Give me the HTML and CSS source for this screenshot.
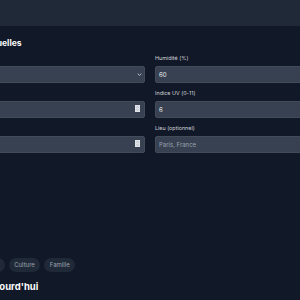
FILE: index.html
```html
<!DOCTYPE html>
<html lang="fr">

<head>
    <meta charset="utf-8">
    <link rel="stylesheet" href="styles.css">
</head>

<body>
    <header class="topbar"></header>

    <main class="wrap">
        <div class="page">
            <h2 class="title">Vos conditions actuelles</h2>

            <div class="form-grid">
                <div class="field">
                    <label for="meteo">Météo</label>
                    <div class="control">
                        <select id="meteo" class="input">
                            <option>Ensoleillé</option>
                        </select>
                        <svg class="chevron" viewBox="0 0 8 5"><path d="M1 1 L4 4 L7 1" fill="none" stroke="#d1d5db" stroke-width="1.4"/></svg>
                    </div>
                </div>
                <div class="field">
                    <label for="humidite">Humidité (%)</label>
                    <input type="text" id="humidite" class="input" value="60">
                </div>

                <div class="field">
                    <label for="temp">Temp. (°C)</label>
                    <div class="control">
                        <input type="text" id="temp" class="input" value="">
                        <svg class="spin" viewBox="0 0 5 7">
                            <rect x="0" y="0" width="5" height="7" fill="#dfe2e7"/>
                            <path d="M1.5 2.6 L2.5 1.6 L3.5 2.6 M1.5 4.4 L2.5 5.4 L3.5 4.4" fill="none" stroke="#8a919c" stroke-width="0.6"/>
                        </svg>
                    </div>
                </div>
                <div class="field">
                    <label for="uv">Indice UV (0-11)</label>
                    <input type="text" id="uv" class="input" value="6">
                </div>

                <div class="field">
                    <label for="vent">Vent (km/h)</label>
                    <div class="control">
                        <input type="text" id="vent" class="input" value="">
                        <svg class="spin" viewBox="0 0 5 7">
                            <rect x="0" y="0" width="5" height="7" fill="#dfe2e7"/>
                            <path d="M1.5 2.6 L2.5 1.6 L3.5 2.6 M1.5 4.4 L2.5 5.4 L3.5 4.4" fill="none" stroke="#8a919c" stroke-width="0.6"/>
                        </svg>
                    </div>
                </div>
                <div class="field">
                    <label for="lieu">Lieu (optionnel)</label>
                    <input type="text" id="lieu" class="input" placeholder="Paris, France">
                </div>
            </div>

            <div class="chips">
                <span class="chip">Plein air</span>
                <span class="chip">Gastronomie</span>
                <span class="chip">Culture</span>
                <span class="chip">Famille</span>
            </div>

            <h2 class="title today">Programme d'aujourd'hui</h2>
        </div>
    </main>
</body>

</html>
```

FILE: styles.css
```css
* {
    box-sizing: border-box;
}

body {
    margin: 0;
    background-color: #111827;
    font-family: "Inter", "Noto Sans", sans-serif;
    color: #f3f4f6;
    overflow: hidden;
    height: 300px;
}

.topbar {
    height: 26px;
    background-color: #1f2937;
}

.wrap {
    display: flex;
    justify-content: center;
}

.page {
    flex-shrink: 0;
    width: 460px;
}

.title {
    margin: 11px 0 0;
    font-size: 8.5px;
    line-height: 12px;
    font-weight: 700;
    color: #f9fafb;
}

.form-grid {
    margin-top: 6px;
    display: grid;
    grid-template-columns: 1fr 1fr;
    column-gap: 10px;
    row-gap: 7px;
}

.field label {
    display: block;
    font-size: 5.4px;
    line-height: 7px;
    color: #d1d5db;
    margin-bottom: 4px;
}

.control {
    position: relative;
}

.input {
    display: block;
    width: 100%;
    height: 17px;
    padding: 0 3px;
    background-color: #374151;
    border: 1px solid #424b5a;
    border-radius: 2px;
    color: #f3f4f6;
    font-family: inherit;
    font-size: 6px;
    outline: none;
    appearance: none;
}

.input::placeholder {
    color: #9ca3af;
}

.chevron {
    position: absolute;
    right: 3px;
    top: 7px;
    width: 5px;
    height: 3px;
}

.spin {
    position: absolute;
    right: 5px;
    top: 4px;
    width: 5px;
    height: 7px;
}

.chips {
    margin-top: 105px;
    display: flex;
    gap: 4px;
}

.chip {
    height: 14px;
    padding: 0 5.5px;
    border-radius: 7px;
    background-color: #1f2937;
    color: #9ca3af;
    font-size: 6px;
    line-height: 14px;
    white-space: nowrap;
}

.today {
    margin-top: 9px;
    font-size: 9.5px;
}
```
